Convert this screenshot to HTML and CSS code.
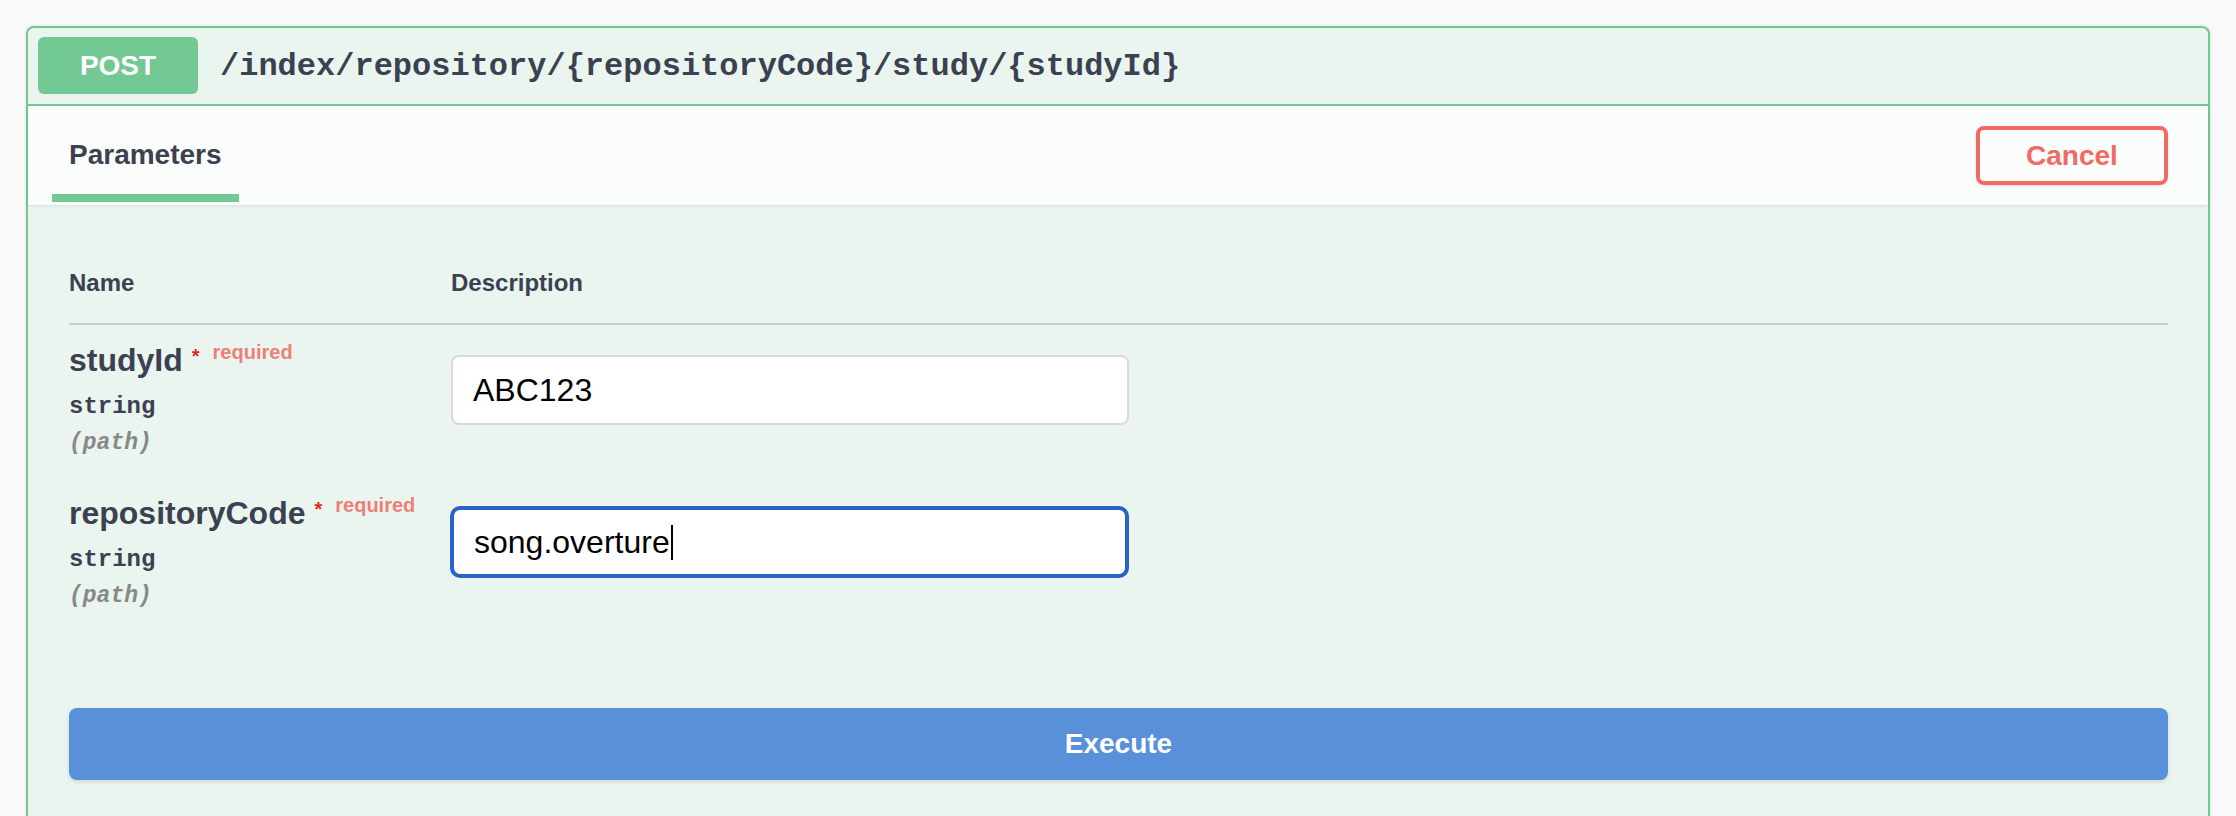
FILE: index.html
```html
<!DOCTYPE html>
<html lang="en">
<head>
<meta charset="utf-8">
<title>POST /index/repository/{repositoryCode}/study/{studyId}</title>
<link rel="stylesheet" href="styles.css">
</head>
<body>
<div class="opblock">
  <div class="summary">
    <span class="method">POST</span>
    <span class="path">/index/repository/{repositoryCode}/study/{studyId}</span>
  </div>
  <div class="section-header">
    <div class="tab">
      <span class="tab-label">Parameters</span>
      <span class="tab-bar"></span>
    </div>
    <button class="btn-cancel">Cancel</button>
  </div>
  <div class="body">
    <div class="table-head">
      <div class="th">Name</div>
      <div class="th">Description</div>
    </div>
    <div class="param-row">
      <div class="param-name-col">
        <div class="param-name">studyId<span class="star">*</span><span class="req">required</span></div>
        <div class="param-type">string</div>
        <div class="param-in">(path)</div>
      </div>
      <div class="param-desc-col">
        <div class="field">ABC123</div>
      </div>
    </div>
    <div class="param-row">
      <div class="param-name-col">
        <div class="param-name">repositoryCode<span class="star">*</span><span class="req">required</span></div>
        <div class="param-type">string</div>
        <div class="param-in">(path)</div>
      </div>
      <div class="param-desc-col">
        <div class="field focused"><span>song.overture</span><span class="caret"></span></div>
      </div>
    </div>
    <button class="btn-execute">Execute</button>
  </div>
</div>
</body>
</html>
```
FILE: styles.css
```css
html, body {
  margin: 0;
  padding: 0;
  background: #fafafa;
}
body {
  font-family: "Liberation Sans", Arial, sans-serif;
  color: #3b4151;
  padding: 26px 26px 0 26px;
}
.opblock {
  width: 2184px;
  box-sizing: border-box;
  border: 2px solid #72c994;
  border-bottom: none;
  border-radius: 8px 8px 0 0;
  background: #ebf5f0;
  box-shadow: 0 0 4px rgba(0,0,0,0.12);
  padding-bottom: 60px;
}
.summary {
  display: flex;
  align-items: center;
  height: 76px;
  padding: 0 10px;
  border-bottom: 2px solid #72c994;
}
.method {
  display: flex;
  align-items: center;
  justify-content: center;
  width: 160px;
  height: 57px;
  margin-top: -1px;
  background: #72c994;
  border-radius: 6px;
  color: #fff;
  font-weight: bold;
  font-size: 28px;
}
.path {
  margin-left: 22px;
  font-family: "Liberation Mono", "Courier New", monospace;
  font-weight: bold;
  font-size: 32px;
  color: #3b4151;
}
.section-header {
  display: flex;
  align-items: center;
  justify-content: space-between;
  height: 99px;
  background: rgba(255,255,255,0.8);
  box-shadow: 0 1px 3px rgba(0,0,0,0.1);
  padding: 0 40px 0 24px;
  position: relative;
}
.tab {
  display: flex;
  flex-direction: column;
  align-self: stretch;
  padding-top: 33px;
}
.tab-label {
  display: block;
  padding: 0 17px;
  font-size: 28px;
  font-weight: bold;
  line-height: 32px;
}
.tab-bar {
  display: block;
  margin-top: 23px;
  height: 8px;
  background: #72c994;
}
.btn-cancel {
  width: 192px;
  height: 59px;
  box-sizing: border-box;
  border: 4px solid #ef6b66;
  border-radius: 8px;
  background: transparent;
  color: #ef6b66;
  font-family: "Liberation Sans", Arial, sans-serif;
  font-weight: bold;
  font-size: 28px;
  box-shadow: 0 1px 3px rgba(0,0,0,0.12);
  padding: 0;
}
.body {
  padding: 0 40px 0 41px;
}
.table-head {
  display: grid;
  grid-template-columns: 382px 1fr;
  padding-top: 64px;
  padding-bottom: 26px;
  border-bottom: 2px solid #c9cdcc;
}
.th {
  font-size: 24px;
  font-weight: bold;
  line-height: 28px;
}
.param-row {
  display: grid;
  grid-template-columns: 382px 1fr;
  padding: 17px 0 21px 0;
}
.param-name {
  font-size: 32px;
  font-weight: bold;
  line-height: 37px;
  white-space: nowrap;
}
.star {
  font-size: 20px;
  line-height: 0;
  color: #e8261e;
  margin-left: 9px;
  vertical-align: 8px;
}
.req {
  font-size: 20px;
  line-height: 0;
  color: #ee7f77;
  margin-left: 13px;
  vertical-align: 12px;
}
.param-type {
  margin-top: 14px;
  font-family: "Liberation Mono", "Courier New", monospace;
  font-weight: bold;
  font-size: 24px;
  line-height: 27px;
}
.param-in {
  margin-top: 10px;
  font-family: "Liberation Mono", "Courier New", monospace;
  font-weight: bold;
  font-style: italic;
  font-size: 23px;
  line-height: 27px;
  color: #888;
}
.field {
  margin-top: 13px;
  width: 678px;
  height: 70px;
  box-sizing: border-box;
  border: 2px solid #d9d9d9;
  border-radius: 8px;
  background: #fff;
  display: flex;
  align-items: center;
  padding-left: 20px;
  font-size: 32px;
  color: #000;
}
.field.focused {
  height: 68px;
  margin-top: 13px;
  width: 675px;
  margin-left: 1px;
  border-color: #2a62c9;
  box-shadow: 0 0 0 2px #2a62c9;
}
.caret {
  display: inline-block;
  width: 2px;
  height: 35px;
  background: #000;
  margin-left: 1px;
}
.btn-execute {
  display: block;
  width: 100%;
  height: 72px;
  margin-top: 77px;
  border: none;
  border-radius: 8px;
  background: #5890da;
  color: #fff;
  font-family: "Liberation Sans", Arial, sans-serif;
  font-weight: bold;
  font-size: 28px;
  box-shadow: 0 2px 4px rgba(0,0,0,0.12);
}
```
